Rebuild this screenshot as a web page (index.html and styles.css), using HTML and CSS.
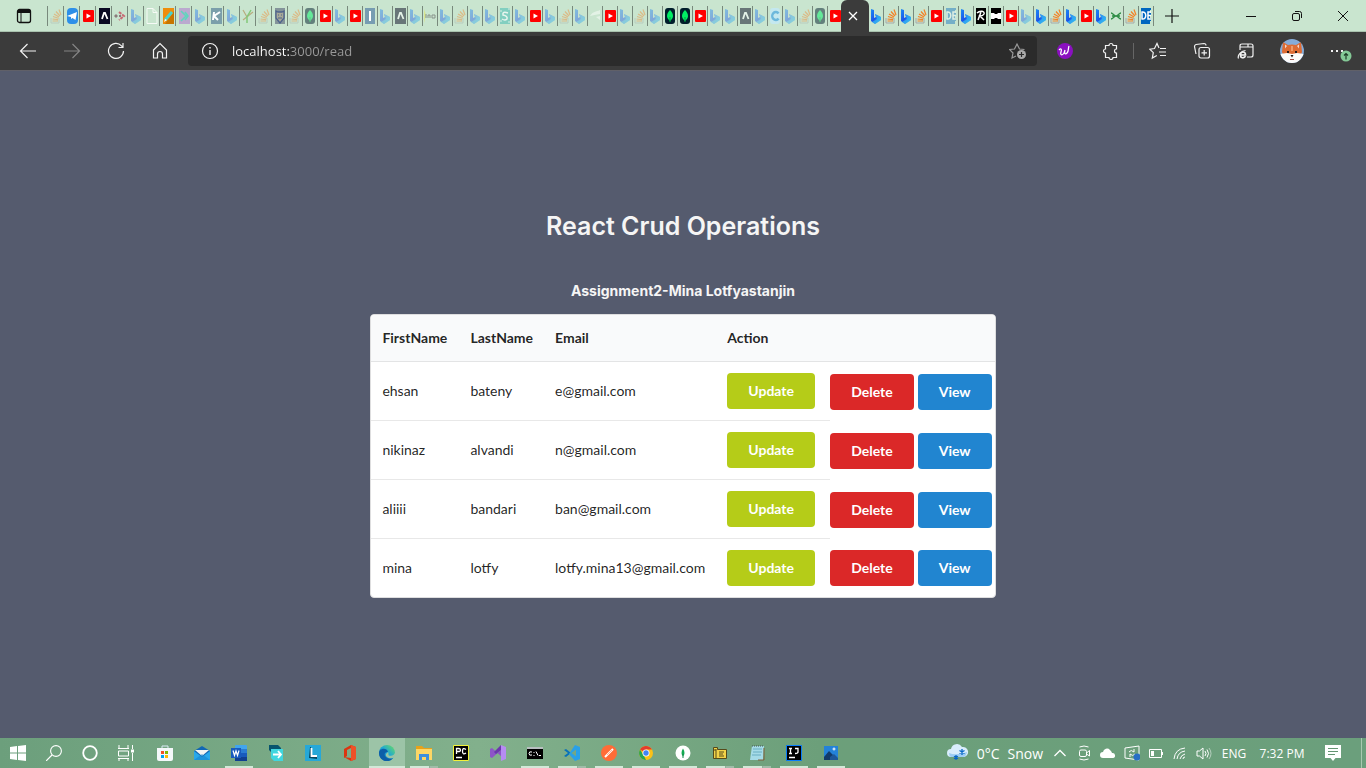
FILE: index.html
```html
<!DOCTYPE html>
<html lang="en">
<head>
<meta charset="utf-8">
<title>React App</title>
<link rel="stylesheet" href="styles.css">
</head>
<body>
<svg class="defs" aria-hidden="true">
  <defs>
    <linearGradient id="g-bing" x1="0" y1="0" x2="1" y2="1"><stop offset="0" stop-color="#1c8cf5"/><stop offset=".5" stop-color="#1c52e8"/><stop offset="1" stop-color="#3cd4f0"/></linearGradient>
    <linearGradient id="g-edge" x1="0" y1="1" x2="1" y2="0"><stop offset="0" stop-color="#0c59a4"/><stop offset=".5" stop-color="#1ba6d8"/><stop offset="1" stop-color="#6fe05a"/></linearGradient>
    <clipPath id="c-face"><circle cx="12" cy="12" r="12"/></clipPath>
  </defs>
  <symbol id="bing" viewBox="0 0 12 16"><path d="M1 1l3 1v8l2-1-1-3 6 3v3l-6 4-4-3z" fill="url(#g-bing)"/><path d="M5 6l6 3v3l-6 4-3-2 5-3z" fill="#35b9f2" opacity=".7"/></symbol>
  <symbol id="so" viewBox="0 0 12 16"><path d="M1 10v5h8v-5" fill="none" stroke="#a5a8a8"/><path d="M2.500 13h5.500M2.500 11l5.500.6M3 8.500l5.500 1.700M4 6l5 3M6 3.500l4 4.500M9 1.500l2 5.500" stroke="#f48024" stroke-width="1.200"/></symbol>
  <symbol id="yt" viewBox="0 0 12 16"><rect x="1" y="2" width="11" height="12" rx="1" fill="#f00"/><path d="M4.500 5.500L9 8l-4.500 2.500z" fill="#fff"/></symbol>
  <symbol id="aw" viewBox="0 0 12 16"><path d="M1 0h11v16H1z" fill="#0a0a23"/><path d="M4 11l2-6h1l2.500 6" stroke="#fff" stroke-width="1.800" fill="none"/></symbol>
  <symbol id="mongo" viewBox="0 0 12 16"><rect x="1" width="10" height="16" rx="3" fill="#001e2b"/><path d="M6 2c4 4 4 8 0 11-4-3-4-7 0-11z" fill="#00ed64"/><path d="M6 9v5" stroke="#00a040"/></symbol>
  <symbol id="de" viewBox="0 0 12 16"><path d="M1 0h10v2h-1v3h1v2h-1v3h1v3h-1v3H1z" fill="#0067c0"/><path d="M2 4c5-1 5 8 0 7zM11 4H8v7h3M8 7.500h3" fill="none" stroke="#fff" stroke-width="1.500"/></symbol>
  <symbol id="telegram" viewBox="0 0 12 16"><rect x="1" width="11" height="16" rx="4" fill="#2d8fe8"/><path d="M1 8l10-4-1.500 8-3-2-1.500 1V9z" fill="#fff"/></symbol>
</svg>

<header class="browser">
  <div class="tabstrip">
    <button class="tab-menu" aria-label="Tab actions"><svg width="16" height="16" viewBox="0 0 16 16"><rect x="1.500" y="1.500" width="13" height="13" rx="2" fill="none" stroke="#111" stroke-width="1.300"/><path d="M2 2h12v3H2z" fill="#111"/><path d="M5 5v9" stroke="#111"/></svg></button>
    <nav class="tabs wide" aria-label="Tabs">
      <i class="off"><svg><use href="#so"/></svg></i>
      <i><svg><use href="#telegram"/></svg></i>
      <i><svg><use href="#yt"/></svg></i>
      <i><svg><use href="#aw"/></svg></i>
      <i><svg viewBox="0 0 12 16"><path d="M5 4l5 4-5 4" fill="none" stroke="#c86a74" stroke-width="2" stroke-dasharray="3 1"/><path d="M0 8l2-2 2 2-2 2zM5 7h2v2H5z" fill="#8b7c7c"/></svg></i>
      <i class="off"><svg><use href="#bing"/></svg></i>
      <i><svg viewBox="0 0 12 16"><path d="M1 .5h6l4 4v11H1zM7 .5v4h4" fill="none" stroke="#f6faf6"/></svg></i>
      <i><svg viewBox="0 0 12 16"><path d="M1 0h11v16H1z" fill="#ee8d0c"/><path d="M12 3v13H3z" fill="#c77500"/><path d="M3 12l7-8" stroke="#45d4d0" stroke-width="3"/><path d="M2 14l1-3 2 1z" fill="#fff"/></svg></i>
      <i><svg viewBox="0 0 12 16"><path d="M1 0h11v16H1z" fill="#bba9cf"/><path d="M3 3l5 5-5 5M7 4l3 4-3 4" fill="none" stroke="#5fd5bd" stroke-width="1.500"/></svg></i>
      <i class="off"><svg><use href="#bing"/></svg></i>
      <i><svg viewBox="0 0 12 16"><path d="M1 0h11v16H1z" fill="#7b9faa"/><path d="M4 4L3 12M10 4L4 8l4 4" fill="none" stroke="#fff" stroke-width="2"/></svg></i>
      <i class="off"><svg><use href="#bing"/></svg></i>
      <i><svg viewBox="0 0 12 16"><path d="M1 2l4 7M11 4L1 12" stroke="#b8ab7d" stroke-width="1.200"/><path d="M5 15V9l4-7" fill="none" stroke="#83c879" stroke-width="1.500"/></svg></i>
      <i class="off"><svg><use href="#so"/></svg></i>
      <i><svg viewBox="0 0 12 16"><path d="M1 0h10v16H1z" fill="#84949a"/><path d="M2 3l2 1h4l2-1v7l-4 5-4-5z" fill="#a8a998" stroke="#4d638c" stroke-width="1.300"/><path d="M4 7h1M7 7h1M4 10h4" stroke="#4d638c"/></svg></i>
    </nav>
    <nav class="tabs narrow" aria-label="More tabs">
      <i class="off"><svg><use href="#so"/></svg></i>
      <i class="dim"><svg><use href="#mongo"/></svg></i>
      <i><svg><use href="#yt"/></svg></i>
      <i class="off"><svg><use href="#bing"/></svg></i>
      <i><svg><use href="#yt"/></svg></i>
      <i><svg viewBox="0 0 12 16"><path d="M1 0h10v16H1z" fill="#779db2"/><path d="M6 3v10" stroke="#fff" stroke-width="2"/></svg></i>
      <i class="off"><svg><use href="#bing"/></svg></i>
      <i class="dim"><svg><use href="#aw"/></svg></i>
      <i class="off"><svg><use href="#bing"/></svg></i>
      <i><svg viewBox="0 0 12 16"><path d="M0 1l2 6-2 8z" fill="#d9e58f"/><path d="M2 6v4M4 10V7h2v3M8 10V7h3v3H8" fill="none" stroke="#87928a"/></svg></i>
      <i class="off"><svg><use href="#bing"/></svg></i>
      <i class="off"><svg><use href="#so"/></svg></i>
      <i class="off"><svg><use href="#bing"/></svg></i>
      <i class="off"><svg><use href="#bing"/></svg></i>
      <i><svg viewBox="0 0 12 16"><path d="M1 0h10v16H1z" fill="#82cfc0"/><path d="M9 5Q3 3 4 7q5 1 4 4-2 2-5 0" fill="none" stroke="#e8f5ee" stroke-width="1.500"/><path d="M1 3h2M9 14h2M9 1h2M1 13h2" stroke="#d8eee4"/></svg></i>
      <i class="off"><svg><use href="#bing"/></svg></i>
      <i><svg><use href="#yt"/></svg></i>
      <i class="off"><svg><use href="#bing"/></svg></i>
      <i class="off"><svg><use href="#so"/></svg></i>
      <i class="off"><svg><use href="#bing"/></svg></i>
      <i><svg viewBox="0 0 12 16"><path d="M1 8c3-5 6-4 10-6v4C7 7 4 7 1 8zM7 9l4-1v4z" fill="#e3f2e6"/></svg></i>
      <i><svg><use href="#yt"/></svg></i>
      <i class="off"><svg><use href="#bing"/></svg></i>
      <i class="off"><svg><use href="#so"/></svg></i>
      <i class="off"><svg><use href="#bing"/></svg></i>
      <i><svg><use href="#mongo"/></svg></i>
      <i><svg><use href="#mongo"/></svg></i>
      <i><svg><use href="#yt"/></svg></i>
      <i class="off"><svg><use href="#bing"/></svg></i>
      <i class="off"><svg><use href="#bing"/></svg></i>
      <i class="dim"><svg><use href="#aw"/></svg></i>
      <i class="off"><svg><use href="#bing"/></svg></i>
      <i><svg viewBox="0 0 12 16"><rect x="1" width="10" height="16" rx="3" fill="#c4e8ef"/><path d="M9.500 5.500a3.500 4 0 1 0 0 5" fill="none" stroke="#6cb8dc" stroke-width="2.500"/></svg></i>
      <i class="off"><svg><use href="#bing"/></svg></i>
      <i class="off"><svg><use href="#so"/></svg></i>
      <i class="dim"><svg><use href="#mongo"/></svg></i>
      <i><svg><use href="#yt"/></svg></i>
    </nav>
    <button class="tab-active" aria-label="Close tab"><svg width="10" height="10" viewBox="0 0 10 10"><path d="M1 1l8 8M9 1L1 9" stroke="#fff" stroke-width="1.300"/></svg></button>
    <nav class="tabs after" aria-label="Other tabs">
      <i><svg><use href="#bing"/></svg></i>
      <i><svg><use href="#so"/></svg></i>
      <i><svg><use href="#bing"/></svg></i>
      <i><svg><use href="#so"/></svg></i>
      <i><svg><use href="#yt"/></svg></i>
      <i class="off"><svg><use href="#de"/></svg></i>
      <i><svg><use href="#bing"/></svg></i>
      <i><svg viewBox="0 0 12 16"><path d="M1 0h10v16H1z" fill="#000"/><path d="M2 5c3-3 8-2 7 1-1 2-3 2-4 2l4 4M6 4l-3 8" fill="none" stroke="#fff" stroke-width="1.500"/></svg></i>
      <i><svg viewBox="0 0 12 16"><path d="M1 0h10v16H1z" fill="#000"/><path d="M1 5h3l1 1h2l1-1h3v6H8l-1-1H5l-1 1H1z" fill="#fff"/></svg></i>
      <i><svg><use href="#yt"/></svg></i>
      <i class="off"><svg><use href="#bing"/></svg></i>
      <i><svg><use href="#bing"/></svg></i>
      <i><svg><use href="#so"/></svg></i>
      <i><svg><use href="#bing"/></svg></i>
      <i><svg><use href="#yt"/></svg></i>
      <i><svg><use href="#bing"/></svg></i>
      <i><svg viewBox="0 0 12 16"><path d="M1 5c2 0 3 3 5 3s3-3 5-3M1 11c2 0 3-3 5-3s3 3 5 3M2 8h8" fill="none" stroke="#2f8d46" stroke-width="1.300"/></svg></i>
      <i><svg><use href="#so"/></svg></i>
      <i><svg><use href="#de"/></svg></i>
    </nav>
    <button class="new-tab" aria-label="New tab"><svg width="14" height="14" viewBox="0 0 14 14"><path d="M7 0v14M0 7h14" stroke="#111" stroke-width="1.200"/></svg></button>
    <div class="window-buttons">
      <button aria-label="Minimize"><svg width="12" height="12" viewBox="0 0 12 12"><path d="M1 6.500h10" stroke="#111"/></svg></button>
      <button aria-label="Restore"><svg width="12" height="12" viewBox="0 0 12 12"><rect x="1.500" y="3.500" width="7" height="7" rx="1.500" fill="none" stroke="#111"/><path d="M4 1.500h4.500a2 2 0 0 1 2 2V8" fill="none" stroke="#111"/></svg></button>
      <button aria-label="Close"><svg width="12" height="12" viewBox="0 0 12 12"><path d="M1 1l10 10M11 1L1 11" stroke="#111"/></svg></button>
    </div>
  </div>

  <div class="toolbar">
    <div class="nav-buttons">
      <button aria-label="Back"><svg width="18" height="18" viewBox="0 0 18 18"><path d="M17 9H2M8.500 2L1.500 9l7 7"/></svg></button>
      <button aria-label="Forward" disabled><svg width="18" height="18" viewBox="0 0 18 18"><path d="M1 9h15M9.500 2l7 7-7 7"/></svg></button>
      <button aria-label="Refresh"><svg width="18" height="18" viewBox="0 0 18 18"><path d="M16.500 9a7.500 7.500 0 1 1-2-5.200L16 5.500M16 1v4.500h-4.500"/></svg></button>
      <button aria-label="Home"><svg width="18" height="18" viewBox="0 0 18 18"><path d="M2.500 8L9 1.500 15.500 8v8h-4v-4a2.500 2.500 0 0 0-5 0v4h-4z"/></svg></button>
    </div>
    <div class="address">
      <button aria-label="Site information"><svg width="18" height="18" viewBox="0 0 18 18"><circle cx="9" cy="9" r="7.500"/><path d="M9 8v5M9 5v1.500" stroke-width="1.400"/></svg></button>
      <input type="text" aria-label="Address" value="localhost:3000/read" spellcheck="false">
      <button class="add-favorite" aria-label="Add to favorites"><svg width="18" height="18" viewBox="0 0 18 18"><path d="M7 14l-4 2 1-5-3.500-3.500 5-.5L8 2l2.500 5 5 .500"/><circle cx="12.500" cy="12.500" r="4.500" fill="#aaa" stroke="none"/><path d="M12.500 10v5M10 12.500h5" stroke="#2b2b2b"/></svg></button>
    </div>
    <div class="extensions">
      <button aria-label="Extension"><svg width="18" height="18" viewBox="0 0 18 18"><circle cx="9" cy="9" r="8" fill="#8a10c0" stroke="none"/><path d="M3 8c2-2 3-1 2 2s1 4 3 1l1-3c-1 3 0 5 2 3s1-5 2-7" stroke="#fff" stroke-width="1.300"/></svg></button>
      <button class="puzzle" aria-label="Extensions"><svg width="18" height="18" viewBox="0 0 18 18"><path d="M5 3.500h3a2 2 0 0 1 4 0h3.500V7a2 2 0 1 0 0 4v4.500H12a2 2 0 0 1-4 0H4.500V11a2 2 0 1 1 0-4V3.500z"/></svg></button>
      <button aria-label="Favorites"><svg width="18" height="18" viewBox="0 0 18 18"><path d="M10 6L8 1.500 5.500 6.500.8 7.200l3.500 3.500-1 5.300 4.500-2.500M11 6.500h6M10 10h7M11 13.500h6"/></svg></button>
      <button aria-label="Collections"><svg width="18" height="18" viewBox="0 0 18 18"><rect x="6" y="5.500" width="10.500" height="10.500" rx="2"/><path d="M3 12L1.500 4.500q0-1.500 1.500-2L11 1.500q2 0 2 2M11.200 8v5.500M8.500 10.800H14"/></svg></button>
      <button aria-label="Internet Explorer mode"><svg width="18" height="18" viewBox="0 0 18 18"><path d="M3 8V4q0-2 2-2h9q2 0 2 2v9q0 2-2 2h-4M3 5h13M11 2v3"/><path d="M3.500 13h5c0-4-5-4-5 0s4 3 5 1.200" stroke-width="1.700"/><path d="M1.500 16.500C0 13 5 8.500 8.500 8.500"/></svg></button>
      <button class="profile" aria-label="Profile"><svg width="24" height="24" viewBox="0 0 24 24"><g clip-path="url(#c-face)" stroke="none"><path d="M0 0h24v24H0z" fill="#86acd8"/><path d="M3 3l5 3q4-1 8 0l5-3 1 10-4 9H6L2 13z" fill="#dd6c34"/><path d="M5 5.500l2 1.500-2 2.500zM19 5.500L17 7l2 2.500z" fill="#f3d8cc"/><path d="M0 15l7-1 5 1 5-1 7 1-4 6-3 3H7l-4-4z" fill="#fbfbfb"/><path d="M12 7v5" stroke="#ef9b68" stroke-width="2"/><path d="M7 12h2v2H7zM15 12h2v2h-2zM10.500 16h3L12 18.500z" fill="#251a18"/><path d="M10 20h4v1h-4z" fill="#a34b45"/></g></svg></button>
      <button class="profile" aria-label="Settings and more"><svg width="24" height="24" viewBox="0 0 24 24"><path d="M3 12h2M8 12h2M13 12h2" stroke-width="2"/><circle cx="18" cy="17" r="5.500" fill="#84c996" stroke="none"/><path d="M18 20.500v-6M16 16.500l2-2 2 2" stroke="#1f3d28"/></svg></button>
    </div>
  </div>
</header>

<main class="page">
  <h2>React Crud Operations</h2>
  <h3>Assignment2-Mina Lotfyastanjin</h3>
  <table class="people">
    <thead>
      <tr><th>FirstName</th><th>LastName</th><th>Email</th><th>Action</th><th></th></tr>
    </thead>
    <tbody>
      <tr><td>ehsan</td><td>bateny</td><td>e@gmail.com</td><td><button class="btn update">Update</button></td><td class="actions"><button class="btn delete">Delete</button><button class="btn view">View</button></td></tr>
      <tr><td>nikinaz</td><td>alvandi</td><td>n@gmail.com</td><td><button class="btn update">Update</button></td><td class="actions"><button class="btn delete">Delete</button><button class="btn view">View</button></td></tr>
      <tr><td>aliiii</td><td>bandari</td><td>ban@gmail.com</td><td><button class="btn update">Update</button></td><td class="actions"><button class="btn delete">Delete</button><button class="btn view">View</button></td></tr>
      <tr><td>mina</td><td>lotfy</td><td>lotfy.mina13@gmail.com</td><td><button class="btn update">Update</button></td><td class="actions"><button class="btn delete">Delete</button><button class="btn view">View</button></td></tr>
    </tbody>
  </table>
</main>

<footer class="taskbar">
  <div class="system">
    <button aria-label="Start"><svg viewBox="0 0 16 16"><path d="M0 2l7-1v6.500H0zM8 1l8-1v7.500H8zM0 8.500h7V15l-7-1zM8 8.500h8V16l-8-1z" fill="#fff"/></svg></button>
    <button aria-label="Search"><svg viewBox="0 0 16 16"><circle cx="10" cy="6" r="5.400" fill="none" stroke="#fff" stroke-width="1.100"/><path d="M6 10l-6 6" stroke="#fff" stroke-width="1.200"/></svg></button>
    <button aria-label="Cortana"><svg viewBox="0 0 16 16"><circle cx="8" cy="8" r="6.800" fill="none" stroke="#fff" stroke-width="1.800"/></svg></button>
    <button aria-label="Task view"><svg viewBox="0 0 16 16"><path d="M0 3.500h11M1 0v3.500M10 0v3.500M.5 6h10v5H.5zM0 13.500h11M1 13.500V16M10 13.500V16M14.500 0v4M14.500 8v8" fill="none" stroke="#fff"/><path d="M13 4.500h3v3h-3z" fill="#fff"/></svg></button>
  </div>
  <div class="apps">
    <button aria-label="Store"><svg viewBox="0 0 16 16"><path d="M5 4V1h6v3" fill="none" stroke="#dbeaf5"/><path d="M0 3h16v11q0 2-2 2H2q-2 0-2-2z" fill="#f4f8fa"/><path d="M4 6h3v3H4z" fill="#f25022"/><path d="M8 6h3v3H8z" fill="#7fba00"/><path d="M4 10h3v3H4z" fill="#00a4ef"/><path d="M8 10h3v3H8z" fill="#ffb900"/></svg></button>
    <button aria-label="Mail"><svg viewBox="0 0 16 16"><path d="M0 6l8-5 8 5v9H0z" fill="#1267b4"/><path d="M1 5h14L8 11z" fill="#f3f3f3"/><path d="M0 6l8 6 8-6v9H0z" fill="#29a8ea"/><path d="M0 15l8-6 8 6z" fill="#1683cf" opacity=".6"/></svg></button>
    <button class="open" aria-label="Word"><svg viewBox="0 0 16 16"><rect x="4" y="0" width="12" height="16" rx="1" fill="#41a5ee"/><path d="M4 4h12v4H4z" fill="#2b7cd3"/><path d="M4 8h12v4H4z" fill="#185abd"/><path d="M4 12h12v4H4z" fill="#103f91"/><path d="M0 3h10v10H0z" fill="#185abd"/><path d="M2 5.500l1.500 5L5 6l1.500 4.500 1.500-5" fill="none" stroke="#fff" stroke-width="1.200"/></svg></button>
    <button aria-label="Remote desktop"><svg viewBox="0 0 16 16"><path d="M1 0h9l3 3v5H4L1 5z" fill="#07546e"/><path d="M3 4h12v12H6L3 13z" fill="#40d6df"/><path d="M5 9.500h8M10 6l3 3.500-3 3.500" fill="none" stroke="#fff" stroke-width="1.800"/></svg></button>
    <button aria-label="L"><svg viewBox="0 0 16 16"><path d="M0 0h16v16H0z" fill="#26a8d8"/><path d="M6 2v9l6 1v2l-8-1 1-11z" fill="#07475f"/><path d="M6.500 3v8H12" fill="none" stroke="#fff" stroke-width="1.800"/></svg></button>
    <button aria-label="Office"><svg viewBox="0 0 16 16"><path d="M2 4l7-4 5 2v12l-5 2-7-4 7 1V3L5 5v6l-3 2z" fill="#dc3510"/><path d="M9 0l5 2v12l-5 2z" fill="#ef5127"/></svg></button>
    <button class="current" aria-label="Edge"><svg viewBox="0 0 16 16"><circle cx="8" cy="8" r="8" fill="url(#g-edge)"/><path d="M0 8c0-5 8-6 9-1-3 0-4 2-3 4 2 3 5 3 8 2-4 6-14 3-14-5z" fill="#0d5ea8"/><path d="M9 7c1 1 0 3 1 3.500 3 1 5-.5 6-2.500v4l-2 1c-4 1-8-1-7-4z" fill="#9ac3a6"/></svg></button>
    <button class="open stacked" aria-label="File Explorer"><svg viewBox="0 0 16 16"><path d="M0 1h6l2 2h8v12H0z" fill="#e6a21a"/><path d="M0 4h16v11H0z" fill="#fdd665"/><path d="M3 15V9h10v6h-3v-3H6v3z" fill="#3f8fdb"/></svg></button>
    <button aria-label="PyCharm"><svg viewBox="0 0 16 16"><path d="M.5.5h15v15H.5z" fill="#000" stroke="#f2f23a"/><path d="M3.500 9V3.500h2q2 0 2 1.500t-2 1.500h-2M13 4.500q-3.500-2.500-3.500 1.700T13 8M3 12.500h6" fill="none" stroke="#fff" stroke-width="1.300"/></svg></button>
    <button aria-label="Visual Studio"><svg viewBox="0 0 16 16"><path d="M0 4l2-1 10 9V4L2 13l-2-1z" fill="#8d55c7"/><path d="M11 0l5 2v12l-5 2z" fill="#b68cf2"/><path d="M11 0v5l-5 4-2-2z" fill="#6b37ad"/></svg></button>
    <button class="open" aria-label="Command Prompt"><svg viewBox="0 0 16 16"><path d="M0 2h16v12H0z" fill="#000"/><path d="M0 2h16v2H0z" fill="#b8bfc0"/><path d="M5 7q-3-1-3 1.500T5 10M7 7v1M7 10v1M9 6.500l2 4M12 10.500h2" fill="none" stroke="#fff"/></svg></button>
    <button class="open stacked" aria-label="VS Code"><svg viewBox="0 0 16 16"><path d="M0 5l2-1 10 8V4L2 12l-2-1 4-3z" fill="#0870b8"/><path d="M11 0l5 2v12l-5 2L5 9z" fill="#29a0e8"/><path d="M12 4.500v7L7.500 8z" fill="#75a784"/></svg></button>
    <button class="open" aria-label="Postman"><svg viewBox="0 0 16 16"><circle cx="8" cy="8" r="8" fill="#ff6c37"/><path d="M4 12L12 4" stroke="#fff" stroke-width="2"/><path d="M6 10l5-5" stroke="#ffb59b"/></svg></button>
    <button class="open" aria-label="Chrome"><svg viewBox="0 0 16 16"><circle cx="8" cy="8" r="7" fill="#fbc116"/><path d="M8 8L2 4.500A7 7 0 0 1 14 4.500H8z" fill="#e33b2e"/><path d="M2 4.500L6 11l2 4A7 7 0 0 1 2 4.500z" fill="#29a552"/><circle cx="8" cy="8" r="3.500" fill="#fff"/><circle cx="8" cy="8" r="2.700" fill="#4285f4"/></svg></button>
    <button class="open" aria-label="MongoDB Compass"><svg viewBox="0 0 16 16"><circle cx="8" cy="8" r="7.500" fill="#fff"/><path d="M8 3.500c2 3 2 6 0 8-2-2-2-5 0-8z" fill="#13aa52"/><path d="M8 9v4" stroke="#13894a"/></svg></button>
    <button class="open stacked" aria-label="Database tool"><svg viewBox="0 0 16 16"><path d="M1.500 2.500h4v2h9v9h-13z" fill="#f2d348" stroke="#554a1a"/><path d="M4 4v9M7 7h5M7 9h4M7 11h5M2 5h2" stroke="#554a1a"/></svg></button>
    <button class="open stacked" aria-label="Notepad"><svg viewBox="0 0 16 16"><path d="M3 1h12l-1 14H1z" fill="#a5dbe7"/><path d="M4 4h9M4 7h9M3 10h9" stroke="#68adc1"/><path d="M3 1h12" stroke="#455" stroke-dasharray="1 1"/><path d="M15 3v12H9" fill="none" stroke="#805e3a"/></svg></button>
    <button class="open" aria-label="IntelliJ IDEA"><svg viewBox="0 0 16 16"><path d="M.5.5h15v15H.5z" fill="#000" stroke="#087cfa"/><path d="M3 3.500h3M4.500 3.500V8M3 8.500h3M9 3.500h3V7q0 1.500-3 1.500M3 12.500h6" fill="none" stroke="#fff" stroke-width="1.300"/></svg></button>
    <button class="open" aria-label="Photos"><svg viewBox="0 0 16 16"><path d="M1 1h14v14H1z" fill="#2382d9"/><path d="M1 12l5-6 9 9H1z" fill="#123a68"/><path d="M7 12l4-3 4 4v2H7z" fill="#1d5799"/><path d="M11 2.500v3M9.500 4h3" stroke="#fff"/></svg></button>
  </div>
  <div class="tray">
    <button class="weather"><svg width="22" height="18" viewBox="0 0 22 18"><path d="M4 13a4 4 0 0 1 0-8 6 6 0 0 1 11-2 5 5 0 0 1 2 10z" fill="#d9edfc" stroke="none"/><path d="M2 9q7 3 18-1-1 5-4 5H4q-2-1-2-4z" fill="#9ecdf3" stroke="none"/><path d="M15 5v6M12.500 6.500l5 3M17.500 6.500l-5 3M9 11v5M7 12.300l4 2.500M11 12.300l-4 2.500" stroke="#0867c8" stroke-width="1.300"/></svg><span>0°C</span><span>Snow</span></button>
    <button aria-label="Show hidden icons"><svg viewBox="0 0 16 16"><path d="M2.500 11L8 5.500l5.500 5.500" stroke-width="1.300"/></svg></button>
    <button aria-label="Meet now"><svg viewBox="0 0 16 16"><rect x="3.500" y="5" width="7" height="6.500" rx="1.500"/><path d="M10.500 8l3-2.500v5.500L10.500 9M3.500 2q4.500-2 9 0M3.500 14q4.500 2 9 0"/></svg></button>
    <button aria-label="OneDrive"><svg viewBox="0 0 16 16"><path d="M3 13a3 3 0 0 1 0-6 4 4 0 0 1 7-2q2 2 2 3a2.500 2.500 0 0 1 1 5z" fill="#fff" stroke="none"/></svg></button>
    <button aria-label="Sync"><svg viewBox="0 0 16 16"><path d="M1 3l14-2v14L1 13zM5 7q2-3 5 0V4M11 9q-2 3-5 0v3"/><circle cx="13" cy="12" r="3.500" fill="#286fc5" stroke="none"/></svg></button>
    <button aria-label="Battery"><svg viewBox="0 0 16 16"><path d="M1.500 4.500h12v8h-12zM14.500 7v3"/><path d="M3 6h3v5H3z" fill="#fff" stroke="none"/></svg></button>
    <button aria-label="Network"><svg viewBox="0 0 16 16"><path d="M2 14Q3 4 13 3M5 14q1-7 8-8M8 14q1-4 5-5M11 14q0-2 2-2"/></svg></button>
    <button aria-label="Volume"><svg viewBox="0 0 16 16"><path d="M1 6h2.500L7 3v11l-3.500-3H1zM9 6q2 2.500 0 5M11 4.500q3 4 0 8"/><path d="M13 3q4 5.500 0 11" opacity=".5"/></svg></button>
    <button class="lang">ENG</button>
    <button class="clock">7:32 PM</button>
    <button class="notices" aria-label="Notifications"><svg viewBox="0 0 16 16"><path d="M0 0h16v13h-5.500L8 16l-2.500-3H0z" fill="#fff" stroke="none"/><path d="M3 3.500h10M3 6.500h10M3 9.500h7" stroke="#649572"/></svg></button>
  </div>
</footer>
</body>
</html>
```
FILE: styles.css
```css
* { box-sizing: border-box; }

body {
  margin: 0;
  min-height: 100vh;
  display: flex;
  flex-direction: column;
  font-family: Lato, "Liberation Sans", sans-serif;
  font-size: 14px;
  background: #555b6e;
}

button {
  border: 0;
  padding: 0;
  margin: 0;
  background: none;
  font: inherit;
  color: inherit;
}

svg { display: block; flex: none; }
.defs { position: absolute; width: 0; height: 0; }

/* Tab strip */
.tabstrip {
  display: flex;
  height: 32px;
  background: #c9e5cf;
  border-bottom: 1px solid #a9c2ae;
}
.tab-menu {
  width: 47px;
  display: grid;
  place-items: center;
}
.tabs { display: flex; align-items: center; }
.tabs i {
  width: 15px;
  height: 20px;
  padding-left: 1px;
  display: flex;
  align-items: center;
  border-left: 1px solid #78897c;
}
.tabs svg { width: 12px; height: 16px; }
.tabs.wide i { width: 16px; padding-left: 2px; }
.tabs.narrow i:last-child { width: 14px; }
.tabs .off svg { opacity: .42; }
.tabs .dim svg { opacity: .5; }
.tabs.after i {
  border-left: 0;
  border-right: 1px solid #78897c;
}
.tab-active {
  width: 28px;
  height: 32px;
  display: grid;
  place-items: center;
  border-radius: 6px 6px 0 0;
  background: #3b3b3b;
}
.tab-active svg { margin-right: 4px; }
.new-tab {
  width: 36px;
  display: grid;
  place-items: center;
}
.window-buttons { display: flex; margin-left: auto; }
.window-buttons button {
  width: 46px;
  display: grid;
  place-items: center;
}

/* Toolbar */
.toolbar {
  display: flex;
  align-items: center;
  height: 39px;
  padding: 0 2px 0 6px;
  background: #3b3b3b;
  border-bottom: 1px solid #606068;
}
.toolbar button { display: grid; place-items: center; }
.toolbar svg {
  fill: none;
  stroke: #f2f2f2;
  stroke-width: 1.2;
}
.nav-buttons { display: flex; }
.nav-buttons button { width: 44px; height: 30px; }
.nav-buttons button:disabled { opacity: .4; }
.address {
  flex: 1;
  height: 30px;
  margin-left: 6px;
  padding: 0 10px 0 13px;
  display: flex;
  align-items: center;
  gap: 13px;
  border-radius: 4px;
  background: #2b2b2b;
}
.address input {
  flex: 1;
  min-width: 0;
  height: 24px;
  padding: 0;
  border: 0;
  outline: 0;
  font-family: "Open Sans", "Noto Sans", sans-serif;
  font-size: 13px;
  /* host name is bright, port and path are muted */
  background: linear-gradient(to right, #fff 57px, #9a9a9a 57px);
  -webkit-background-clip: text;
  background-clip: text;
  color: transparent;
}
.address .add-favorite svg { stroke: #9a9a9a; }
.extensions { display: flex; margin-left: 6px; }
.extensions button { width: 44px; height: 24px; }
.extensions .puzzle {
  width: 47px;
  padding-right: 2px;
  margin-right: 2px;
  background: linear-gradient(#666, #666) right center / 1px 16px no-repeat;
}
.extensions .profile { width: 48px; }

/* Page */
.page {
  flex: 1;
  display: flex;
  flex-direction: column;
  align-items: center;
  justify-content: center;
  color: #f5f5f5;
}
h2, h3 {
  margin: 0;
  font-family: Inter, "Open Sans", sans-serif;
  font-weight: 600;
}
h2 { font-size: 25px; line-height: 30px; margin-bottom: 41px; }
h3 { font-size: 14px; line-height: 18px; margin-bottom: 14px; font-weight: 700; }

.people {
  border: 1px solid #dededf;
  border-radius: 4px;
  border-spacing: 0;
  overflow: hidden;
  background: #fff;
  color: rgba(0, 0, 0, .87);
  line-height: 18px;
  text-align: left;
  white-space: nowrap;
}
.people th {
  height: 47px;
  padding: 0 11px;
  font-weight: 700;
  background: #f9fafb;
  border-bottom: 1px solid #e3e4e5;
}
.people th:first-child { min-width: 88px; }
.people td {
  height: 59px;
  padding: 0 11px;
  border-bottom: 1px solid #e8e8e8;
}
.people tr:last-child td,
.people .actions { border-bottom: 0; }
.people tbody tr:last-child td { height: 58px; }
.people .actions { padding: 0; }
.btn {
  height: 36px;
  padding: 0 21px;
  margin-right: 4px;
  border-radius: 4px;
  font-weight: 700;
  line-height: 14px;
  color: #fff;
}
.update { min-width: 88px; background: #b5cc18; }
.delete { background: #db2828; }
.view { background: #2185d0; margin-right: 3px; }

/* Taskbar */
.taskbar {
  display: flex;
  height: 30px;
  color: #fff;
  background: linear-gradient(to right, #6c9f7c, #82b08c 35%, #6c9f7a 60%, #6b9f7c);
  font-family: "Open Sans", "Noto Sans", sans-serif;
  font-size: 12px;
}
.system, .apps { display: flex; }
.system button, .apps button {
  width: 36px;
  display: grid;
  place-items: center;
}
.system svg, .apps svg { width: 16px; height: 16px; }
.apps { gap: 1px; margin-left: 3px; }
.apps .open {
  background: linear-gradient(#d2e8d8, #d2e8d8) center bottom / 28px 2px no-repeat;
}
.apps .stacked {
  background:
    linear-gradient(to right, #d2e8d8 19px, #80a48a 19px, #a0bca8 20px) center bottom / 28px 2px no-repeat;
}
.apps .current {
  background: linear-gradient(#d2e8d8, #d2e8d8) center bottom / 36px 2px no-repeat, #9cc4a7;
}
.tray {
  display: flex;
  align-items: center;
  margin-left: auto;
  padding-right: 4px;
}
.tray button { height: 30px; width: 24px; display: grid; place-items: center; }
.tray svg { width: 16px; height: 16px; fill: none; stroke: #fff; }
.tray .weather {
  width: auto;
  display: flex;
  align-items: center;
  gap: 8px;
  margin-right: 5px;
  font-size: 14px;
}
.tray .weather svg { width: 22px; height: 18px; }
.tray .lang { width: 36px; }
.tray .clock { width: 60px; }
.tray .notices {
  width: 50px;
  padding-right: 8px;
  border-right: 1px solid #a8c9b0;
}
```
